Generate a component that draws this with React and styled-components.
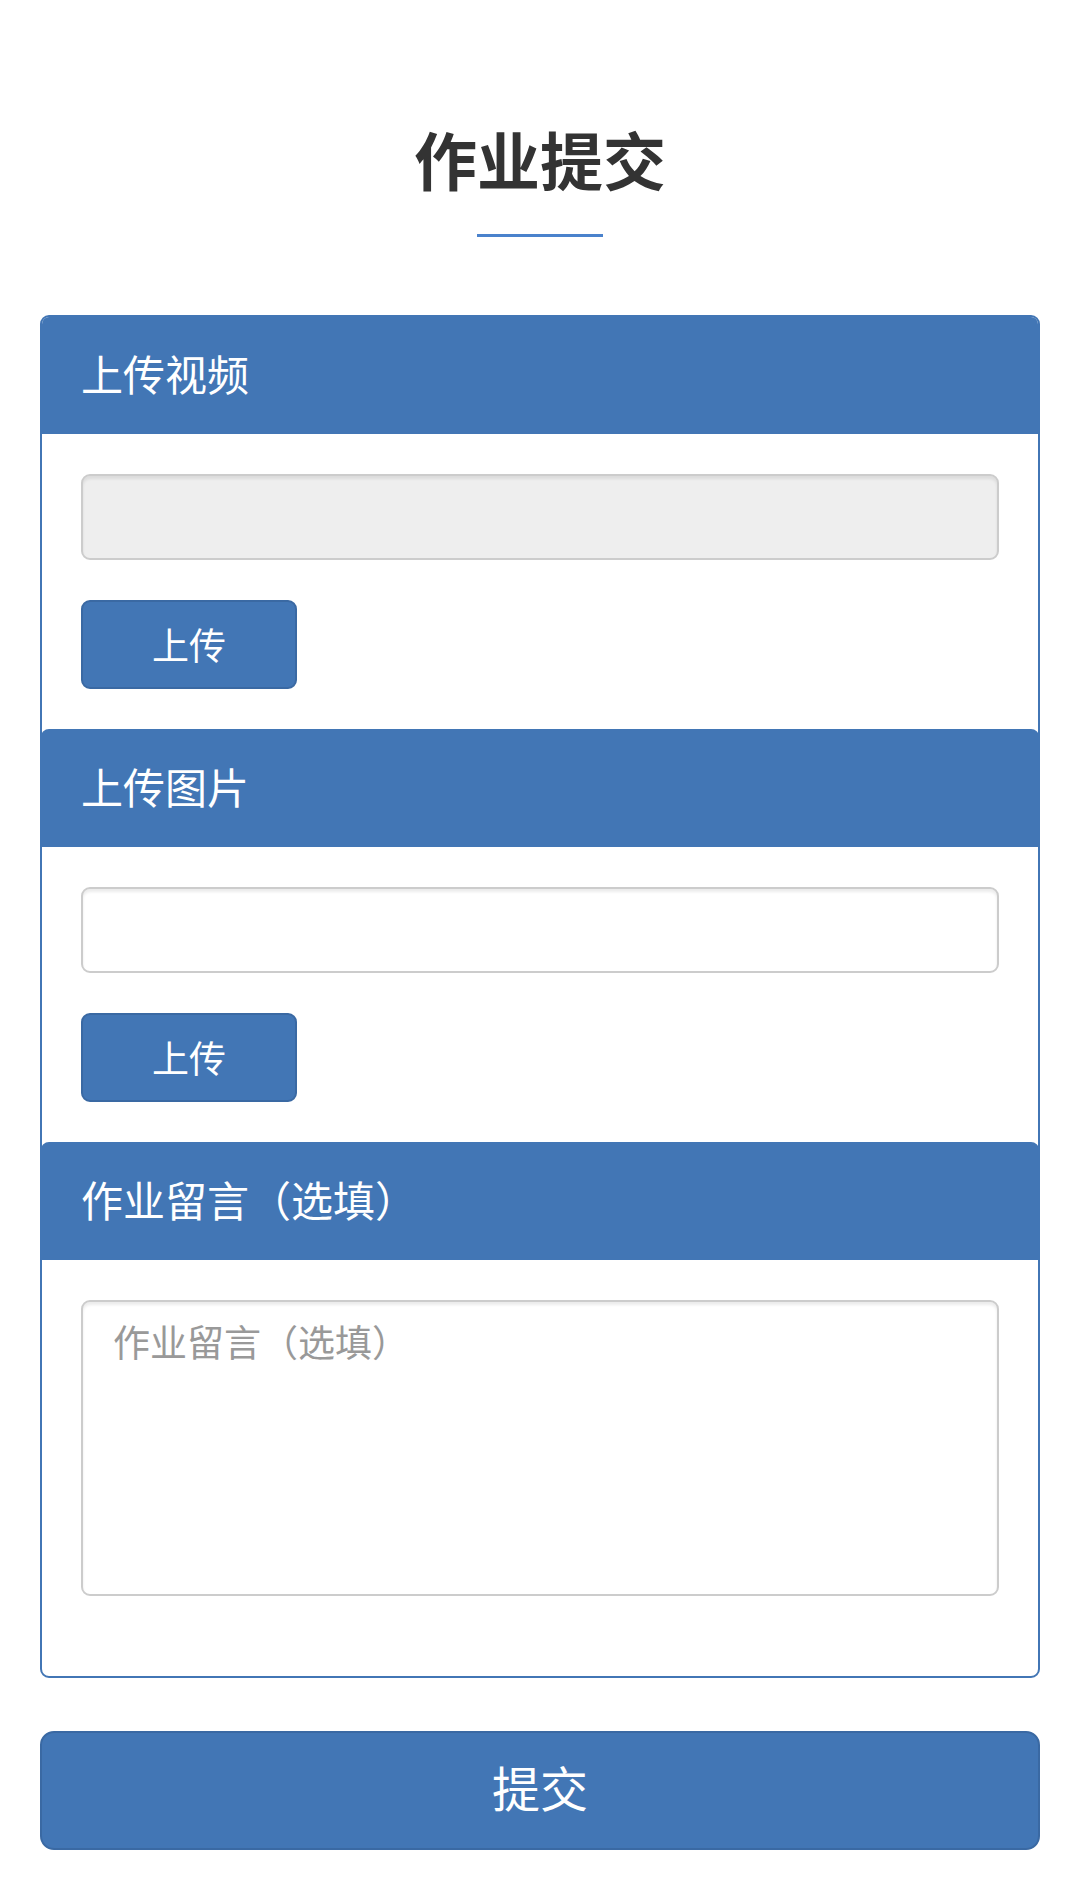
import React from "react";
import styled, { createGlobalStyle } from "styled-components";

const Global = createGlobalStyle`
  html, body { margin: 0; padding: 0; background: #ffffff; }
  body { font-family: "Noto Sans CJK SC", "Noto Sans", sans-serif; }
  * { box-sizing: border-box; }
`;

const BLUE = "#4276b5";

const Page = styled.div`
  width: 1080px;
  padding: 118px 40px 0;
  display: flex;
  flex-direction: column;
  align-items: stretch;
`;

const TitleBlock = styled.div`
  display: flex;
  flex-direction: column;
  align-items: center;
`;

const Title = styled.h1`
  margin: 0;
  font-size: 63px;
  line-height: 80px;
  font-weight: 700;
  color: #333333;
  letter-spacing: 0;
`;

const Underline = styled.div`
  margin-top: 36px;
  width: 126px;
  height: 3px;
  background: #4a82cc;
`;

const Panel = styled.div`
  margin-top: 78px;
  border: 2px solid ${BLUE};
  border-radius: 9px;
  overflow: hidden;
  background: #fff;
`;

const Section = styled.section`
  display: flex;
  flex-direction: column;
`;

const SectionHeader = styled.div`
  height: 118px;
  padding: 0 40px 5px;
  display: flex;
  align-items: center;
  background: ${BLUE};
  color: #ffffff;
  font-size: 42px;
  font-weight: 400;
  border-radius: 8px 8px 0 0;
  margin: ${(p) => (p.$first ? "-1px -1px 0" : "0 -1px")};
`;

const SectionBody = styled.div`
  padding: 40px 39px ${(p) => (p.$last ? "80px" : "40px")};
  display: flex;
  flex-direction: column;
  align-items: flex-start;
  gap: 40px;
`;

const Field = styled.div`
  width: 100%;
  height: 86px;
  border: 2px solid #cccccc;
  border-radius: 9px;
  background: ${(p) => (p.$disabled ? "#eeeeee" : "#ffffff")};
  box-shadow: inset 0 3px 3px rgba(0, 0, 0, 0.08);
`;

const TextArea = styled.textarea`
  display: block;
  width: 100%;
  height: 296px;
  border: 2px solid #cccccc;
  border-radius: 9px;
  background: #ffffff;
  box-shadow: inset 0 3px 3px rgba(0, 0, 0, 0.08);
  padding: 14px 30px;
  font-family: "Noto Sans CJK SC", sans-serif;
  font-size: 37px;
  line-height: 1.4;
  color: #555;
  resize: none;
  outline: none;
  &::placeholder { color: #999999; }
`;

const UploadButton = styled.button`
  width: 216px;
  height: 89px;
  border: 2px solid #3a69a3;
  border-radius: 9px;
  background: ${BLUE};
  color: #ffffff;
  font-family: "Noto Sans CJK SC", sans-serif;
  font-size: 37px;
  font-weight: 400;
  display: flex;
  align-items: center;
  justify-content: center;
  padding: 0 0 2px;
  cursor: pointer;
`;

const SubmitButton = styled.button`
  margin-top: 53px;
  width: 100%;
  height: 119px;
  border: 2px solid #3a69a3;
  border-radius: 14px;
  background: ${BLUE};
  color: #ffffff;
  font-family: "Noto Sans CJK SC", sans-serif;
  font-size: 48px;
  font-weight: 400;
  display: flex;
  align-items: center;
  justify-content: center;
  padding: 0 0 9px;
  cursor: pointer;
`;

export default function App() {
  return (
    <>
      <Global />
      <Page>
        <TitleBlock>
          <Title>作业提交</Title>
          <Underline />
        </TitleBlock>
        <Panel>
          <Section>
            <SectionHeader $first>上传视频</SectionHeader>
            <SectionBody>
              <Field $disabled />
              <UploadButton>上传</UploadButton>
            </SectionBody>
          </Section>
          <Section>
            <SectionHeader>上传图片</SectionHeader>
            <SectionBody>
              <Field />
              <UploadButton>上传</UploadButton>
            </SectionBody>
          </Section>
          <Section>
            <SectionHeader>作业留言（选填）</SectionHeader>
            <SectionBody $last>
              <TextArea placeholder="作业留言（选填）" />
            </SectionBody>
          </Section>
        </Panel>
        <SubmitButton>提交</SubmitButton>
      </Page>
    </>
  );
}
